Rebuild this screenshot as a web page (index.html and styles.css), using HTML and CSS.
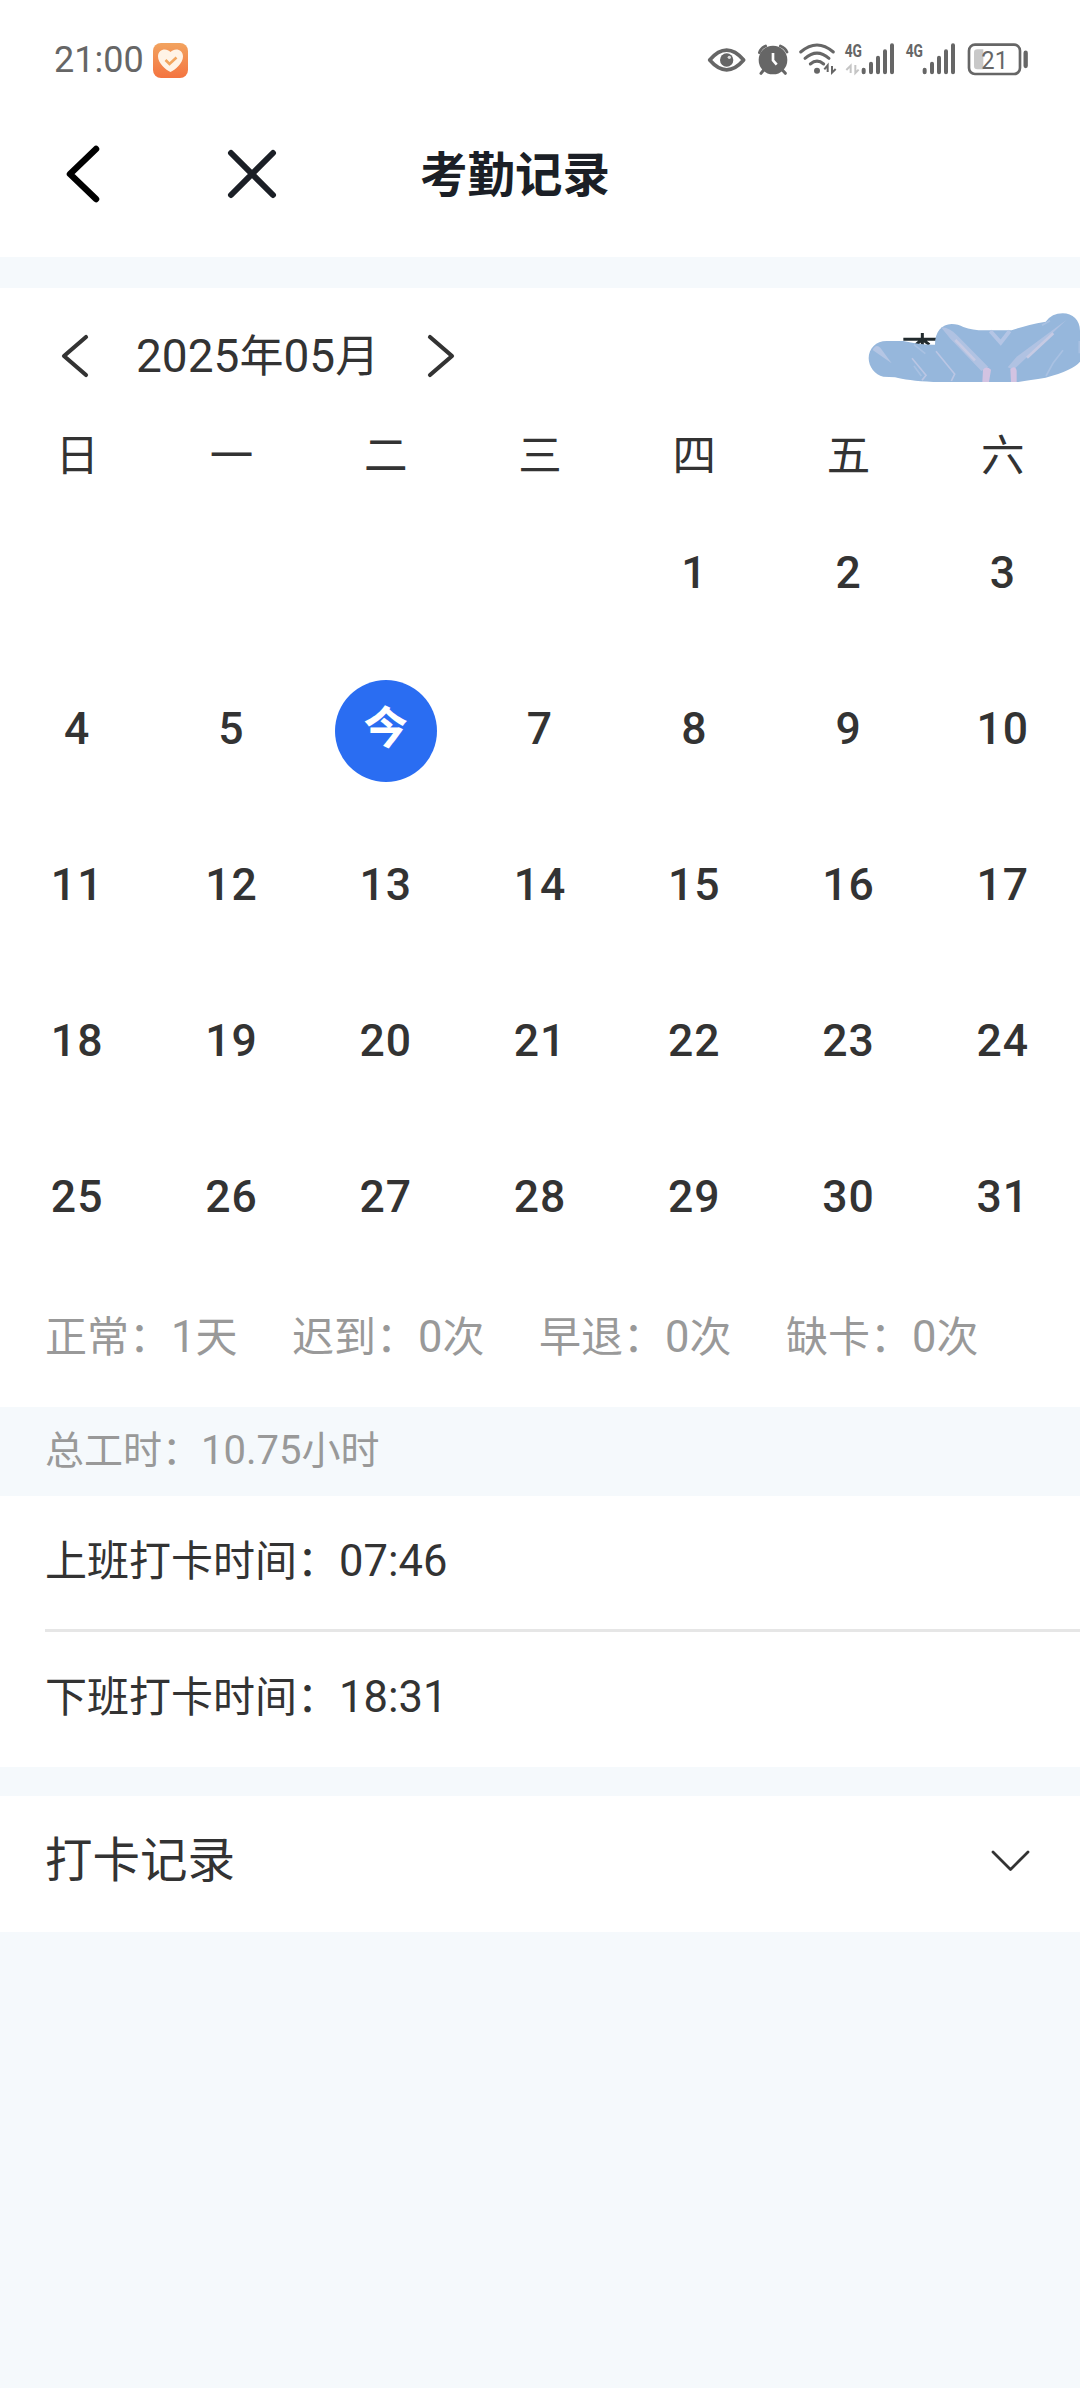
FILE: index.html
```html
<!DOCTYPE html>
<html lang="zh-CN">
<head>
<meta charset="utf-8">
<title>考勤记录</title>
<link rel="stylesheet" href="styles.css">
</head>
<body>
<div class="status">
  <span class="clock">21:00</span>
  <svg class="health" width="35" height="35" viewBox="0 0 35 35">
    <defs><linearGradient id="og" x1="0" y1="0" x2="0" y2="1"><stop offset="0" stop-color="#f2a35f"/><stop offset="1" stop-color="#f47440"/></linearGradient></defs>
    <rect width="35" height="35" rx="8" fill="url(#og)"/>
    <path d="M17.5 29C13 27 5 20 5 13.500C5 6 13.500 4.500 17.500 9C21.500 4.500 30 6 30 13.500C30 20 22 27 17.500 29Z" fill="#fff3e6"/>
    <path d="M12.500 17l4 4 7-6.500" fill="none" stroke="#f2a55e" stroke-width="2.600"/>
  </svg>
  <svg class="indicators" width="360" height="60" viewBox="0 0 1080 180">
    <g fill="none" stroke="#666" stroke-linecap="round">
      <path d="M59 90Q110 31 161 90Q110 149 59 90Z" stroke-width="11" stroke-linejoin="round"/>
      <path d="M208 68Q212 54 227 48M271 48Q286 54 291 66" stroke-width="8"/>
      <path d="M221 120L213 130M277 120L286 130" stroke-width="9"/>
      <path d="M332 66Q381 24 430 66M345 85Q381 54 417 85M361 102Q381 85 401 102" stroke-width="9"/>
    </g>
    <circle cx="110" cy="90" r="20" fill="#666"/><circle cx="118" cy="82" r="5" fill="#ddd"/>
    <circle cx="249" cy="90" r="43" fill="#666"/>
    <path d="M249 69V91L260 104" fill="none" stroke="#fff" stroke-width="8"/>
    <circle cx="381" cy="122" r="9" fill="#666"/>
    <path d="M413 126V106L403 118M426 108V128L437 117" fill="none" stroke="#666" stroke-width="6"/>
    <path d="M482 129V107L469 120M496 105V129L506 119" fill="none" stroke="#c5c5c5" stroke-width="6"/>
    <path d="M521 119V127M543 101V127M564 83V127M585 64V127M606 46V127M704 119V127M726 101V127M747 83V127M768 64V127M789 46V127" stroke="#666" stroke-width="12" stroke-linecap="round"/>
    <rect x="837" y="44" width="153" height="88" rx="18" fill="none" stroke="#666" stroke-width="8"/>
    <path d="M880 58H862Q852 58 852 68V108Q852 118 862 118H880Z" fill="#c8c8c8"/>
    <path d="M1007 68V108" stroke="#666" stroke-width="13" stroke-linecap="round"/>
    <g class="ind-text"><text x="464" y="80" font-size="54" font-weight="700" textLength="52" lengthAdjust="spacingAndGlyphs">4G</text><text x="647" y="80" font-size="54" font-weight="700" textLength="52" lengthAdjust="spacingAndGlyphs">4G</text><text x="874" y="116" font-size="79" textLength="80" lengthAdjust="spacingAndGlyphs">21</text></g>
  </svg>
</div>
<header class="header">
  <svg width="40" height="64" viewBox="0 0 40 64"><path d="M33 7L7 32L33 57" fill="none" stroke="#000" stroke-width="6.500" stroke-linecap="round" stroke-linejoin="round"/></svg>
  <svg class="close" width="54" height="54" viewBox="0 0 54 54"><path d="M6 6L48 48M48 6L6 48" stroke="#1b1f26" stroke-width="6" stroke-linecap="round"/></svg>
  <h1>考勤记录</h1>
</header>
<section class="calendar">
  <div class="month">
    <svg width="32" height="48" viewBox="0 0 32 48"><path d="M26 5L4 24L26 43" fill="none" stroke="#333" stroke-width="4.200" stroke-linecap="round" stroke-linejoin="round"/></svg>
    <span class="label"><span class="n">2025</span>年<span class="n">05</span>月</span>
    <svg width="32" height="48" viewBox="0 0 32 48"><path d="M6 5L28 24L6 43" fill="none" stroke="#333" stroke-width="4.200" stroke-linecap="round" stroke-linejoin="round"/></svg>
    <svg class="scribble" width="240" height="110" viewBox="0 0 720 330">
      <path d="M190 148H290M247 129V165M244 150L228 164M250 150L268 164" stroke="#222b2e" stroke-width="9"/>
      <path d="M86 205C86 175 108 153 140 153L190 153Q240 165 285 164C285 125 305 103 335 102Q355 102 370 111Q400 122 440 121H515Q555 106 617 95Q636 70 668 70C698 70 720 90 720 122V215Q700 240 617 263Q570 270 535 276H280Q200 272 165 262L130 260C105 255 86 230 86 205Z" fill="#96b7dc"/>
      <g fill="none" stroke="#bac6e4">
        <path d="M303 112Q330 112 354 139L445 231L424 243L331 146Z" fill="#b0c2e2" stroke="none"/>
        <path d="M680 89L521 239L503 232L530 200Z" fill="#b0c2e2" stroke="none"/>
        <path d="M346 150L405 211M640 130L561 203" stroke="#c6cae3" stroke-width="8"/>
        <path d="M451 123L482 158L509 123" stroke="#b4c5e5" stroke-width="12"/>
        <path d="M216 205L258 256L246 271M288 184L344 252L334 273" stroke-width="5"/>
        <path d="M98 180Q108 160 121 173L155 220Z" fill="#b5c6e4" stroke="none"/>
        <path d="M222 164L256 191M222 228L244 258M606 106L630 92M669 181L640 218L618 258M718 153V190" stroke="#a9c1e2" stroke-width="5"/>
      </g>
      <path d="M429 239Q439 226 453 239L447 276H427ZM511 237Q525 225 530 242V276H513Z" fill="#d3c3e2"/>
    </svg>
  </div>
  <div class="week"><span>日</span><span>一</span><span>二</span><span>三</span><span>四</span><span>五</span><span>六</span></div>
  <div class="days">
    <span></span><span></span><span></span><span></span><span>1</span><span>2</span><span>3</span>
    <span>4</span><span>5</span><span><b class="today">今</b></span><span>7</span><span>8</span><span>9</span><span>10</span>
    <span>11</span><span>12</span><span>13</span><span>14</span><span>15</span><span>16</span><span>17</span>
    <span>18</span><span>19</span><span>20</span><span>21</span><span>22</span><span>23</span><span>24</span>
    <span>25</span><span>26</span><span>27</span><span>28</span><span>29</span><span>30</span><span>31</span>
  </div>
  <div class="stats">
    <span>正常：<span class="n">1</span>天</span><span>迟到：<span class="n">0</span>次</span><span>早退：<span class="n">0</span>次</span><span>缺卡：<span class="n">0</span>次</span>
  </div>
</section>
<div class="total">总工时：<span class="n">10.75</span>小时</div>
<section class="times">
  <div class="time">上班打卡时间：<span class="n">07:46</span></div>
  <div class="time">下班打卡时间：<span class="n">18:31</span></div>
</section>
<section class="records">
  <span>打卡记录</span>
  <svg width="40" height="26" viewBox="0 0 40 26"><path d="M3 4L20.500 21.500L38 4" fill="none" stroke="#333" stroke-width="2.800" stroke-linecap="round" stroke-linejoin="round"/></svg>
</section>
</body>
</html>
```

FILE: styles.css
```css
* { box-sizing: border-box; }
body {
  margin: 0;
  width: 1080px;
  min-height: 2388px;
  background: #f5f9fc;
  color: #333;
  font-family: Roboto, "Noto Sans CJK SC", sans-serif;
}
svg { display: block; flex: none; }
.status {
  display: flex;
  align-items: center;
  height: 120px;
  padding-left: 54px;
  background: #fff;
}
.clock {
  width: 99px;
  font-size: 36px;
  line-height: 40px;
  color: #666;
  white-space: nowrap;
}
.indicators { margin-left: 502px; }
.ind-text { fill: #666; }
.header {
  display: flex;
  align-items: center;
  height: 137px;
  padding: 0 0 29px 63px;
  background: #fff;
}
.close { margin-left: 122px; }
h1 {
  margin: 0 0 0 141px;
  padding-top: 4px;
  font-size: 47.500px;
  line-height: 60px;
  font-weight: 700;
  color: #1b1f26;
}
.calendar {
  height: 1119px;
  margin-top: 31px;
  background: #fff;
}
.month {
  display: flex;
  align-items: center;
  height: 136px;
  padding-left: 60px;
}
.label {
  width: 246px;
  margin: 0 42px 0 44px;
  font-size: 44px;
  line-height: 60px;
  white-space: nowrap;
}
.label .n { font-size: 46px; }
.scribble { margin: 0 0 22px auto; }
.week, .days {
  display: grid;
  grid-template-columns: repeat(7, 1fr);
  text-align: center;
}
.week {
  height: 71px;
  font-size: 43.500px;
  line-height: 66px;
}
.days {
  grid-auto-rows: 156px;
  font-size: 44.500px;
  font-weight: 500;
  letter-spacing: 1px;
}
.days > span {
  display: flex;
  align-items: center;
  justify-content: center;
}
.today {
  width: 102px;
  height: 102px;
  margin-top: 4px;
  border-radius: 50%;
  background: #2a6df2;
  color: #fff;
  font-weight: 700;
  line-height: 99px;
  letter-spacing: 0;
}
.stats {
  display: grid;
  grid-template-columns: repeat(4, 247px);
  padding-left: 45px;
  margin-top: 33px;
  font-size: 42px;
  line-height: 60px;
  color: #999;
  white-space: nowrap;
}
.total {
  height: 89px;
  padding-left: 45px;
  font-size: 39px;
  line-height: 87px;
  color: #999;
}
.total .n { font-size: 40px; }
.times { background: #fff; padding-left: 45px; }
.time { height: 133px; font-size: 42px; line-height: 132px; }
.time + .time { border-top: 3px solid #e6e6e6; height: 138px; line-height: 131px; }
.times .n, .stats .n { font-size: 43.500px; }
.records {
  display: flex;
  align-items: center;
  justify-content: space-between;
  height: 136px;
  margin-top: 29px;
  padding: 0 50px 6px 45px;
  background: #fff;
  font-size: 47.500px;
  line-height: 60px;
}
```
